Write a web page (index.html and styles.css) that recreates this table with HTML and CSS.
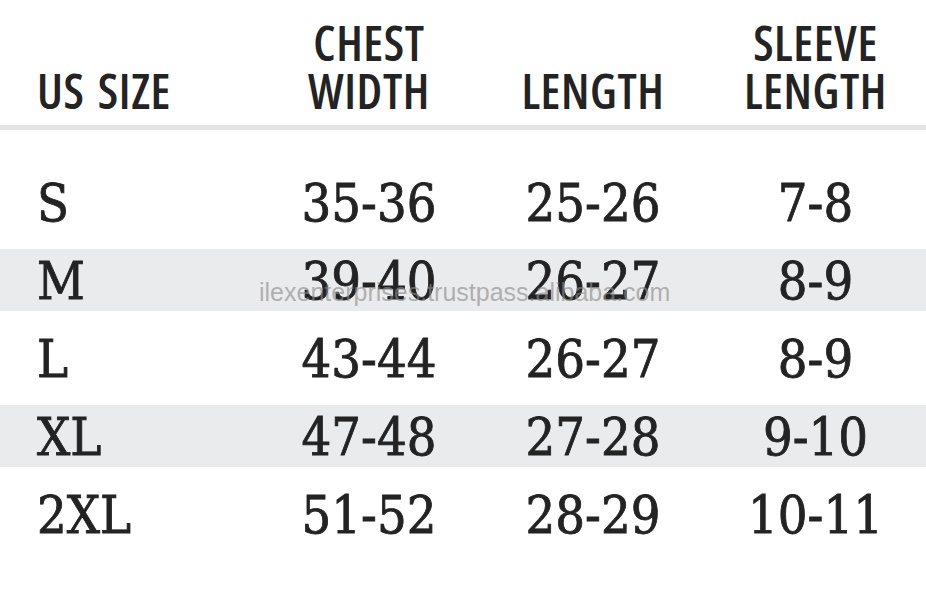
FILE: index.html
```html
<!DOCTYPE html>
<html>
<head>
<meta charset="utf-8">
<link rel="stylesheet" href="styles.css">
</head>
<body>
<div class="chart">
  <div class="head">
    <div class="hcell first">US SIZE</div>
    <div class="hcell">CHEST<br>WIDTH</div>
    <div class="hcell">LENGTH</div>
    <div class="hcell">SLEEVE<br>LENGTH</div>
  </div>
  <div class="rows">
    <div class="row"><div class="cell first">S</div><div class="cell">35-36</div><div class="cell">25-26</div><div class="cell">7-8</div></div>
    <div class="row alt"><div class="cell first">M</div><div class="cell">39-40</div><div class="cell">26-27</div><div class="cell">8-9</div></div>
    <div class="row"><div class="cell first">L</div><div class="cell">43-44</div><div class="cell">26-27</div><div class="cell">8-9</div></div>
    <div class="row alt"><div class="cell first">XL</div><div class="cell">47-48</div><div class="cell">27-28</div><div class="cell">9-10</div></div>
    <div class="row"><div class="cell first">2XL</div><div class="cell">51-52</div><div class="cell">28-29</div><div class="cell">10-11</div></div>
  </div>
  <div class="watermark">ilexenterprises.trustpass.alibaba.com</div>
</div>
</body>
</html>
```
FILE: styles.css
```css
html, body {
  margin: 0;
  padding: 0;
  background: #ffffff;
}
.chart {
  position: relative;
  width: 926px;
  height: 594px;
  overflow: hidden;
  color: #232323;
}
.head {
  display: grid;
  grid-template-columns: 257px 224px 224px 221px;
  align-items: end;
  padding-top: 19px;
  padding-bottom: 10px;
  border-bottom: 5px solid #e3e3e3;
}
.hcell {
  font-family: "Open Sans", sans-serif;
  font-stretch: 75%;
  font-weight: 640;
  font-size: 48px;
  line-height: 48px;
  letter-spacing: 0.6px;
  text-align: center;
}
.hcell.first {
  text-align: left;
  padding-left: 37px;
  word-spacing: 4px;
}
.rows {
  display: flex;
  flex-direction: column;
  gap: 16px;
  padding-top: 41px;
}
.row {
  display: grid;
  grid-template-columns: 257px 224px 224px 221px;
  height: 62px;
  align-items: center;
}
.row.alt {
  background: #eaebec;
}
.cell {
  font-family: "DejaVu Serif", serif;
  font-stretch: condensed;
  font-size: 52px;
  line-height: 62px;
  padding-top: 1px;
  text-align: center;
  -webkit-text-stroke: 0.8px #232323;
}
.cell.first {
  text-align: left;
  padding-left: 37px;
}
.watermark {
  position: absolute;
  left: 259px;
  top: 278px;
  font-family: "Liberation Sans", Arial, sans-serif;
  font-size: 25px;
  line-height: 28px;
  color: rgba(140, 140, 140, 0.65);
  white-space: nowrap;
}
```
